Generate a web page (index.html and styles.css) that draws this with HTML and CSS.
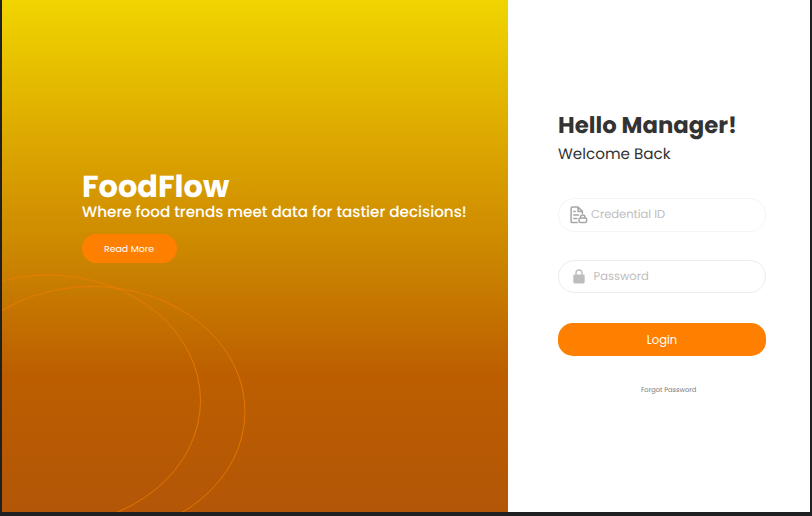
FILE: index.html
```html
<!DOCTYPE html>
<html lang="en">
<head>
<meta charset="utf-8">
<title>FoodFlow</title>
<link rel="stylesheet" href="styles.css">
</head>
<body>
<main class="screen">
  <section class="hero">
    <svg class="rings" viewBox="0 0 506 512" fill="none">
      <ellipse cx="46" cy="400.5" rx="152.5" ry="125.5"/>
      <ellipse cx="90" cy="411.5" rx="153" ry="125"/>
    </svg>
    <div class="intro">
      <h1 class="brand">FoodFlow</h1>
      <p class="tagline">Where food trends meet data for tastier decisions!</p>
      <button class="more" type="button"><span>Read More</span></button>
    </div>
  </section>
  <form class="login">
    <h2 class="greeting">Hello Manager!</h2>
    <p class="welcome">Welcome Back</p>
    <div class="field credential">
      <svg class="doc-icon" viewBox="0 0 18 18" fill="none" stroke="#a6a6a6" stroke-width="1.5" stroke-linejoin="round" stroke-linecap="round">
        <path d="M7.2 16.6H2.3Q1.1 16.6 1.1 15.4V2.2Q1.1 1 2.3 1H8L12.4 5.4V7.2M8 1V5.4H12.4M3.8 5.6H5.2M3.8 9H8.5M3.8 12.5H6.8"/>
        <rect x="9" y="12" width="7.6" height="4.6" rx="1.4"/>
        <path d="M10.6 11.8V11Q10.6 9.1 12.8 9.1Q15 9.1 15 11V11.8"/>
      </svg>
      <span class="credential-text">Credential ID</span>
    </div>
    <div class="field password">
      <svg class="lock-icon" viewBox="0 0 12 15">
        <path d="M3 6.5V4Q3 1 6 1Q9 1 9 4V6.5" fill="none" stroke="#bdbdbd" stroke-width="1.4"/>
        <rect x=".3" y="5.6" width="11.4" height="8.8" rx="1.3" fill="#bdbdbd"/>
      </svg>
      <span class="password-text">Password</span>
    </div>
    <button class="submit" type="button"><span>Login</span></button>
    <a class="forgot">Forgot Password</a>
  </form>
</main>
</body>
</html>
```
FILE: styles.css
```css
* { box-sizing: border-box; }
body {
  margin: 0;
  background: #202023;
  font-family: Poppins, Inter, "Liberation Sans", sans-serif;
  text-rendering: geometricPrecision;
}
h1, h2, p { margin: 0; }
button { border: 0; padding: 0; font-family: inherit; display: flex; align-items: center; justify-content: center; }
h1, h2, p, span, a { white-space: nowrap; }
.screen {
  display: grid;
  grid-template-columns: 506px 302px;
  height: 516px;
  padding: 0 2px 4px;
}
.hero {
  position: relative;
  overflow: hidden;
  padding: 169px 0 0 80px;
  color: #fff;
  background: linear-gradient(#f0d500 0, #d9a000 165px, #ca8300 265px, #bc5e00 375px, #b35607 512px);
}
.rings { position: absolute; left: 0; top: 0; width: 506px; height: 512px; stroke: #ee7c00; stroke-width: .8; }
.intro { position: relative; }
.brand { font-size: 30.4px; line-height: 36px; font-weight: 700; }
.tagline { font-size: 15.2px; line-height: 16px; font-weight: 500; }
.more { width: 95px; height: 29px; margin-top: 13px; border-radius: 15px; color: #fff; background: #ff8000; font-size: 9.4px; }
.more span { margin-right: 1px; }
.login { padding: 110px 44px 0 50px; background: #fff; display: flex; flex-direction: column; align-items: flex-start; }
.greeting { font-size: 22.8px; line-height: 30px; font-weight: 700; color: #333; }
.welcome { font-size: 15.2px; line-height: 20px; margin-top: 5px; color: #333; }
.field { width: 208px; height: 34px; border: 1px solid #f5f5f5; border-radius: 16px; display: flex; align-items: center; font-size: 11.5px; color: #bdbdbd; }
.credential { margin-top: 33px; padding-left: 11px; }
.password { height: 33px; margin-top: 28px; padding-left: 13.5px; border-color: #ececec; }
.password-text { padding-top: 1px; }
.doc-icon { width: 18px; height: 18px; margin-right: 3px; }
.lock-icon { width: 12px; height: 15px; margin-right: 9px; }
.submit { width: 208px; height: 33px; margin-top: 30px; border-radius: 15px; color: #fff; background: #ff8000; font-size: 11.6px; }
.submit span { padding-top: 2px; }
.forgot { margin: 30px 0 0 83px; font-size: 6.7px; line-height: 10px; color: #777; }
```
